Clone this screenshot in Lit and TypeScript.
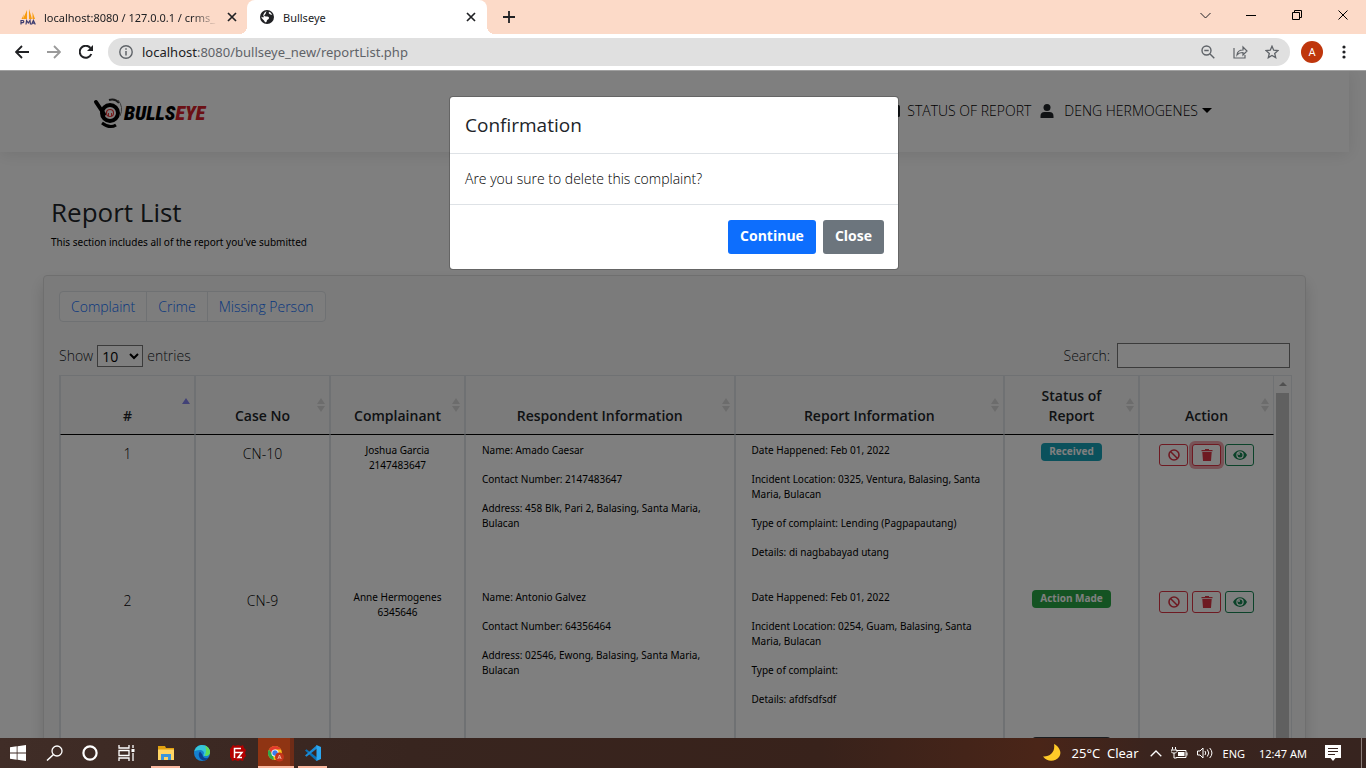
import { LitElement, html, css, svg, nothing } from "lit";
import { customElement, state } from "lit/decorators.js";
import { classMap } from "lit/directives/class-map.js";

interface Report {
  no: number;
  caseNo: string;
  complainant: string;
  phone: string;
  respondent: string[];
  details: string[];
  status: string;
  tone: string;
}

const REPORTS: Report[] = [
  {
    no: 1,
    caseNo: "CN-10",
    complainant: "Joshua Garcia",
    phone: "2147483647",
    respondent: [
      "Name: Amado Caesar",
      "Contact Number: 2147483647",
      "Address: 458 Blk, Pari 2, Balasing, Santa Maria, Bulacan",
    ],
    details: [
      "Date Happened: Feb 01, 2022",
      "Incident Location: 0325, Ventura, Balasing, Santa Maria, Bulacan",
      "Type of complaint: Lending (Pagpapautang)",
      "Details: di nagbabayad utang",
    ],
    status: "Received",
    tone: "info",
  },
  {
    no: 2,
    caseNo: "CN-9",
    complainant: "Anne Hermogenes",
    phone: "6345646",
    respondent: [
      "Name: Antonio Galvez",
      "Contact Number: 64356464",
      "Address: 02546, Ewong, Balasing, Santa Maria, Bulacan",
    ],
    details: [
      "Date Happened: Feb 01, 2022",
      "Incident Location: 0254, Guam, Balasing, Santa Maria, Bulacan",
      "Type of complaint:",
      "Details: afdfsdfsdf",
    ],
    status: "Action Made",
    tone: "success",
  },
];

const COLUMNS = [
  { label: "#", wide: false, asc: true },
  { label: "Case No", wide: false, asc: false },
  { label: "Complainant", wide: false, asc: false },
  { label: "Respondent Information", wide: true, asc: false },
  { label: "Report Information", wide: true, asc: false },
  { label: "Status of Report", wide: false, asc: false },
  { label: "Action", wide: false, asc: false },
];

const icon = (w: number, h: number, body: unknown) =>
  html`<svg width=${w} height=${h} viewBox="0 0 ${w} ${h}" fill="none" aria-hidden="true">${body}</svg>`;

const closeGlyph = icon(10, 10, svg`<path d="M1 1l8 8M9 1L1 9" stroke="#202124" stroke-width="1.7"/>`);

@customElement("browser-chrome")
export class BrowserChrome extends LitElement {
  static styles = css`
    :host {
      display: block;
      font-family: "Noto Sans", "Open Sans", sans-serif;
      color: #202124;
    }
    button {
      border: 0;
      padding: 0;
      background: none;
      color: inherit;
      display: flex;
      align-items: center;
      justify-content: center;
    }
    svg {
      display: block;
      flex: none;
    }
    .tabs {
      height: 34px;
      background: #fcdac8;
      display: flex;
      font-size: 11px;
    }
    .tab {
      display: flex;
      align-items: center;
      width: 240px;
      box-sizing: border-box;
      padding: 0 10px 0 13px;
      gap: 9px;
    }
    .tab.first {
      width: 247px;
      padding: 0 9px 0 20px;
      gap: 8px;
    }
    .tab.active {
      position: relative;
      background: #fff;
      border-radius: 8px 8px 0 0;
    }
    .tab.active::before,
    .tab.active::after {
      content: "";
      position: absolute;
      bottom: 0;
      width: 8px;
      height: 8px;
    }
    .tab.active::before {
      left: -8px;
      background: radial-gradient(circle at 0 0, transparent 8px, #fff 8px);
    }
    .tab.active::after {
      right: -8px;
      background: radial-gradient(circle at 100% 0, transparent 8px, #fff 8px);
    }
    .tab-title {
      flex: 1;
      min-width: 0;
      overflow: hidden;
      white-space: nowrap;
    }
    .tab.first .tab-title {
      mask-image: linear-gradient(to right, #000 85%, transparent);
    }
    .tab button {
      width: 12px;
      height: 16px;
    }
    .new-tab {
      width: 44px;
    }
    .controls {
      margin-left: auto;
      display: flex;
    }
    .controls button {
      width: 46px;
      height: 30px;
    }
    .toolbar {
      height: 36px;
      display: flex;
      align-items: center;
      background: #fff;
      padding: 0 6px;
      border-bottom: 1px solid #a0a0a0;
    }
    .nav {
      width: 32px;
      height: 32px;
    }
    .page-actions {
      display: flex;
    }
    .omnibox {
      flex: 1;
      min-width: 0;
      height: 28px;
      margin: 0 6px;
      padding: 0 2px 0 11px;
      border-radius: 14px;
      background: #e0e0e0;
      display: flex;
      align-items: center;
      gap: 9px;
      box-sizing: border-box;
    }
    .url {
      flex: 1;
      font-size: 13px;
      color: #5f6368;
    }
    .host {
      color: #202124;
    }
    .avatar {
      width: 22px;
      height: 22px;
      margin: 0 5px;
      border-radius: 50%;
      background: #bf360c;
      color: #fff;
      font: 11px Roboto, sans-serif;
    }
  `;

  render() {
    return html`
      <div class="tabs">
        <div class="tab first">
          ${icon(16, 16, svg`<path d="M7 1L3 10h4zM9 0v10h3zM12.500 3v7h2.500zM4 5L1.500 10H3z" fill="#f89c0e"/><path d="M1 15.500v-4h2q1.500 1.200 0 2.200H1M6 15.500l.600-4 1.700 2.500 1.700-2.500.500 4M11.500 15.500l1.900-4 1.900 4M12 14.200h3" stroke="#3c3c70" stroke-width="1.200"/>`)}
          <span class="tab-title">localhost:8080 / 127.0.0.1 / crms_</span>
          <button aria-label="Close tab">${closeGlyph}</button>
        </div>
        <div class="tab active">
          ${icon(14, 14, svg`<circle cx="7" cy="7" r="7" fill="#202124"/><path d="M7.500 1.500C5 2 6.500 3.500 5 4.500S4.200 6.300 6 6.500s3.200 0 3 1.700c-.200 1.300-2 1-2.200 2.500-.100 1-.600 1.800-1.800 1.600C4.500 10 1.300 9 1.400 6.500c1 1 2 1 2.600.500C2.500 5.500 4 3 5.500 1.800z" fill="#fff"/><path d="M9 1.800c-1 1.700.500 2.700 3.200 3.200L10.800 2.800z" fill="#fff"/>`)}
          <span class="tab-title">Bullseye</span>
          <button aria-label="Close tab">${closeGlyph}</button>
        </div>
        <button class="new-tab" aria-label="New tab">
          ${icon(12, 12, svg`<path d="M6 0v12M0 6h12" stroke="#202124" stroke-width="1.800"/>`)}
        </button>
        <div class="controls">
          <button aria-label="Search tabs">${icon(11, 7, svg`<path d="M.500 1l5 5 5-5" stroke="#202124"/>`)}</button>
          <button aria-label="Minimize">${icon(10, 1, svg`<path d="M0 .500h10" stroke="#000"/>`)}</button>
          <button aria-label="Restore">${icon(10, 10, svg`<path d="M.500 2.500h7v7h-7zM2.500 2.500v-2h7v7h-2" stroke="#000"/>`)}</button>
          <button aria-label="Close">${icon(10, 10, svg`<path d="M.500.500l9 9M9.500.500l-9 9" stroke="#000"/>`)}</button>
        </div>
      </div>
      <div class="toolbar">
        <button class="nav" aria-label="Back">${icon(14, 14, svg`<path d="M14 7H1.500M7 1L1 7l6 6" stroke="#202124" stroke-width="1.800"/>`)}</button>
        <button class="nav" aria-label="Forward">${icon(14, 14, svg`<path d="M0 7h12.500M7 1l6 6-6 6" stroke="#9a9a9a" stroke-width="1.800"/>`)}</button>
        <button class="nav" aria-label="Reload">${icon(14, 14, svg`<path d="M12.300 9A6 6 0 1 1 11.400 3" stroke="#202124" stroke-width="2"/><path d="M14 0v6H8z" fill="#202124"/>`)}</button>
        <div class="omnibox">
          ${icon(14, 14, svg`<circle cx="7" cy="7" r="6.200" stroke="#5f6368" stroke-width="1.400"/><path d="M7 6v4.500M7 3.300v1.500" stroke="#5f6368" stroke-width="1.500"/>`)}
          <span class="url"><span class="host">localhost</span>:8080/bullseye_new/reportList.php</span>
          <div class="page-actions">
            <button class="nav" aria-label="Zoom">${icon(14, 14, svg`<circle cx="5.500" cy="5.500" r="4.500" stroke="#5f6368" stroke-width="1.400"/><path d="M3.300 5.500h4.400M9 9l4.300 4.300" stroke="#5f6368" stroke-width="1.400"/>`)}</button>
            <button class="nav" aria-label="Share">${icon(15, 14, svg`<path d="M1 3v10h11v-3" stroke="#5f6368" stroke-width="1.200"/><path d="M4 10c.300-3.500 2.500-5 6-5V2l4 4-4 4V7.500C7.500 7.500 5.500 8 4 10z" stroke="#5f6368" stroke-width="1.200"/>`)}</button>
            <button class="nav" aria-label="Bookmark">${icon(14, 14, svg`<path d="M7 1.200l1.700 4 4.300.400-3.300 2.800 1 4.200L7 10.400l-3.700 2.200 1-4.200L1 5.600l4.300-.400z" stroke="#5f6368" stroke-width="1.300"/>`)}</button>
          </div>
        </div>
        <button class="avatar" aria-label="Profile">A</button>
        <button class="nav" aria-label="Menu">${icon(4, 14, svg`<g fill="#202124"><circle cx="2" cy="2" r="1.600"/><circle cx="2" cy="7" r="1.600"/><circle cx="2" cy="12" r="1.600"/></g>`)}</button>
      </div>
    `;
  }
}

@customElement("report-page")
export class ReportPage extends LitElement {
  static styles = css`
    :host {
      display: block;
      overflow: hidden;
      background: #fff;
      color: #000;
      font: 300 14px/22px "Open Sans", "Noto Sans", sans-serif;
      padding-right: 17px;
    }
    button,
    input,
    select {
      font: inherit;
    }
    svg {
      display: block;
      flex: none;
    }
    a {
      color: inherit;
      text-decoration: none;
    }
    .navbar {
      height: 81px;
      display: flex;
      align-items: center;
      box-sizing: border-box;
      padding: 0 137px 2px 93px;
      box-shadow: 0 2px 16px rgba(0, 0, 0, 0.1);
    }
    .brand {
      padding-top: 3px;
    }
    .links {
      margin-left: auto;
      display: flex;
      align-items: center;
      color: #000;
    }
    .links a {
      display: flex;
      align-items: center;
      gap: 7px;
    }
    .links .user {
      gap: 10px;
      margin-left: 9px;
    }
    .caret {
      border: 5px solid transparent;
      border-top-color: #000;
      border-bottom: 0;
      margin-left: -6px;
    }
    .wordmark {
      font: italic 900 20px "Liberation Sans Narrow", "Roboto Condensed", Roboto, sans-serif;
    }
    .intro {
      padding: 45px 51px 26px;
    }
    h1 {
      margin: 0 0 8px;
      font: 400 26px/30px "Open Sans", sans-serif;
      color: #212529;
    }
    .intro p {
      margin: 0;
      font: 400 10px/14px "Noto Sans", "Open Sans", sans-serif;
    }
    .card {
      margin: 0 43px;
      padding: 15px 13px 200px 15px;
      border: 1px solid #dfdfdf;
      border-radius: 4px;
      background: #f7f7f7;
      box-shadow: 0 8px 16px rgba(0, 0, 0, 0.15);
    }
    .filters {
      display: flex;
      width: fit-content;
      border: 1px solid #dee2e6;
      border-radius: 4px;
      background: #fafafa;
    }
    .filters a {
      padding: 0 11px;
      line-height: 29px;
      color: #0d6efd;
    }
    .filters a + a {
      border-left: 1px solid #dee2e6;
    }
    .bar {
      display: flex;
      justify-content: space-between;
      align-items: center;
      height: 25px;
      margin: 21px 2px 7px 0;
      color: #212529;
    }
    .bar select {
      width: 46px;
      height: 22px;
      padding: 0;
      border: 1px solid #767676;
      border-radius: 0;
      background: #fff;
      color: #000;
      font-weight: 400;
    }
    .bar label {
      display: flex;
      align-items: center;
      gap: 4px;
    }
    .bar .search {
      gap: 7px;
    }
    .bar input {
      width: 173px;
      height: 25px;
      box-sizing: border-box;
      border: 1px solid #767676;
      background: #fff;
    }
    .scroll {
      display: flex;
      border: 1px solid #dee2e6;
      border-bottom: 0;
    }
    .table-wrap {
      flex: 1;
      min-width: 0;
    }
    table {
      width: 100%;
      table-layout: fixed;
      border-collapse: separate;
      border-spacing: 0;
    }
    .wide {
      width: 22.2%;
    }
    th,
    td {
      box-sizing: border-box;
      border: solid #dee2e6;
      border-width: 0 1px;
      padding: 8px 16px;
      text-align: center;
      vertical-align: top;
    }
    th {
      position: relative;
      vertical-align: bottom;
      padding: 10px 16px 8px;
      border-bottom: 1px solid #000;
      color: #212529;
      font-weight: 600;
      line-height: 20px;
    }
    td {
      background: #fff;
      height: 147px;
    }
    .fine {
      font: 400 10px/15px "Noto Sans", "Open Sans", sans-serif;
    }
    .info {
      text-align: left;
    }
    .info p {
      margin: 0 0 14px;
    }
    .sort {
      position: absolute;
      right: 4px;
      bottom: 22px;
    }
    .badge {
      display: inline-block;
      vertical-align: top;
      padding: 0 8px 1px;
      border-radius: 4px;
      color: #fff;
      font-weight: 700;
      font-size: 10px;
      line-height: 17px;
    }
    .badge.info-tone {
      background: #17a2b8;
    }
    .badge.success-tone {
      background: #28a745;
    }
    .badge.dark-tone {
      background: #343a40;
      min-width: 63px;
    }
    .actions {
      display: flex;
      justify-content: center;
      gap: 4px;
      padding-top: 1px;
    }
    .actions button {
      width: 29px;
      height: 22px;
      padding: 0;
      border: 1px solid #dc3545;
      border-radius: 3px;
      background: #fff;
      display: flex;
      align-items: center;
      justify-content: center;
    }
    .actions .view {
      border-color: #198754;
    }
    .actions .focused {
      box-shadow: 0 0 0 3px #f0a5ac;
    }
    td.tight {
      padding: 8px 4px;
    }
    .track {
      width: 17px;
      display: flex;
      flex-direction: column;
      align-items: center;
      background: #f7f7f7;
    }
    .up {
      margin: 6px 0 7px;
      border: 4px solid transparent;
      border-top: 0;
      border-bottom-color: #a0a0a0;
    }
    .thumb {
      flex: 1;
      width: 13px;
      background: #c1c1c1;
    }
  `;

  private sortIcon(asc: boolean) {
    return html`<span class="sort">${asc
      ? icon(8, 14, svg`<path d="M4 0l4 6H0z" fill="#8585ee"/>`)
      : icon(8, 14, svg`<path d="M4 0l4 6H0zM0 8h8l-4 6z" fill="#d8d8d8"/>`)}</span>`;
  }

  private actions(focused: boolean) {
    return html`<div class="actions">
      <button aria-label="Cancel complaint">
        ${icon(12, 12, svg`<circle cx="6" cy="6" r="5" stroke="#dc3545" stroke-width="1.600"/><path d="M2.500 2.500l7 7" stroke="#dc3545" stroke-width="1.500"/>`)}
      </button>
      <button class=${classMap({ focused })} aria-label="Delete complaint">
        ${icon(12, 12, svg`<path d="M.500 1H4V0h4v1h3.500v1.300H.500zM1.300 3h9.400L10 12H2z" fill="#dc3545"/>`)}
      </button>
      <button class="view" aria-label="View complaint">
        ${icon(14, 10, svg`<path fill-rule="evenodd" d="M0 5c3-6.500 11-6.500 14 0-3 6.500-11 6.500-14 0zm7-3.700a3.700 3.700 0 1 0 0 7.400 3.700 3.700 0 0 0 0-7.400z" fill="#198754"/><circle cx="7" cy="5" r="2.500" fill="#198754"/><circle cx="6" cy="4" r="1" fill="#fff"/>`)}
      </button>
    </div>`;
  }

  render() {
    return html`
      <nav class="navbar">
        <a class="brand" href="#" aria-label="Bullseye">
          <svg width="122" height="34" viewBox="0 0 122 34" fill="none">
            <path d="M3 7l8 12" stroke="#000" stroke-width="4" stroke-linecap="round"/>
            <circle cx="17" cy="18" r="8" stroke="#000" stroke-width="4"/>
            <circle cx="17" cy="18" r="3.500" stroke="#e33" stroke-width="1.200"/>
            <path d="M15.500 21v-3M18.500 21v-3" stroke="#e33"/>
            <path d="M9 28q8 6 14 2" stroke="#000" stroke-width="3"/>
            <path d="M16 5q6-2 10 3" stroke="#333" stroke-width="2"/>
            <path d="M25 5q6 7 2 16" stroke="#777"/>
            <text class="wordmark" x="31" y="25"><tspan fill="#000">BULLS</tspan><tspan fill="#d6202a">EYE</tspan></text>
          </svg>
        </a>
        <div class="links">
          <a href="#">${icon(14, 14, svg`<rect y="1" width="14" height="12" rx="1.500" fill="#212529"/><path d="M10 5h2M10 8h2" stroke="#fff"/>`)}STATUS OF REPORT</a>
          <a class="user" href="#">${icon(14, 14, svg`<circle cx="7" cy="3.500" r="3.500" fill="#212529"/><path d="M.500 14v-2c0-2.500 1.500-4 4-4h5c2.500 0 4 1.500 4 4v2z" fill="#212529"/>`)}DENG HERMOGENES<span class="caret"></span></a>
        </div>
      </nav>
      <header class="intro">
        <h1>Report List</h1>
        <p>This section includes all of the report you've submitted</p>
      </header>
      <section class="card">
        <div class="filters"><a href="#">Complaint</a><a href="#">Crime</a><a href="#">Missing Person</a></div>
        <div class="bar">
          <label>Show <select><option>10</option><option>25</option><option>50</option></select> entries</label>
          <label class="search">Search: <input type="search" /></label>
        </div>
        <div class="scroll">
          <div class="table-wrap">
            <table>
              <thead>
                <tr>${COLUMNS.map((c) => html`<th class=${classMap({ wide: c.wide })}>${c.label}${this.sortIcon(c.asc)}</th>`)}</tr>
              </thead>
              <tbody>
                ${REPORTS.map((r, i) => html`<tr>
                  <td>${r.no}</td>
                  <td>${r.caseNo}</td>
                  <td class="fine tight">${r.complainant}<br />${r.phone}</td>
                  <td class="fine info">${r.respondent.map((t) => html`<p>${t}</p>`)}</td>
                  <td class="fine info">${r.details.map((t) => html`<p>${t}</p>`)}</td>
                  <td class="tight"><span class="badge ${r.tone}-tone">${r.status}</span></td>
                  <td class="tight">${this.actions(i === 0)}</td>
                </tr>`)}
                <tr>
                  <td></td><td></td><td></td><td></td><td></td>
                  <td class="tight"><span class="badge dark-tone">&nbsp;</span></td>
                  <td></td>
                </tr>
              </tbody>
            </table>
          </div>
          <div class="track"><span class="up"></span><span class="thumb"></span></div>
        </div>
      </section>
    `;
  }
}

@customElement("task-bar")
export class TaskBar extends LitElement {
  static styles = css`
    :host {
      display: flex;
      align-items: stretch;
      height: 30px;
      color: #fff;
      font: 12px "Noto Sans", "Open Sans", sans-serif;
      background: linear-gradient(to right, #402d27, #38251f 30%, #38221b 60%, #4a2518 76%, #3a241e 84%, #37241f);
    }
    button {
      width: 36px;
      padding: 0;
      border: 0;
      background: none;
      color: inherit;
      font: inherit;
      display: flex;
      align-items: center;
      justify-content: center;
    }
    svg {
      display: block;
      flex: none;
    }
    .apps {
      display: flex;
      margin-left: 3px;
    }
    .apps button {
      width: 36px;
      box-sizing: border-box;
      border-bottom: 2px solid transparent;
      border-top: 2px solid transparent;
      background-clip: padding-box;
    }
    .apps .open {
      width: 29px;
      margin: 0 4px;
      border-bottom-color: #fbb9a0;
    }
    .apps .active {
      background: linear-gradient(to right, #8f3413 88%, #6e2c17 88%) border-box;
      border-top-color: transparent;
      border-bottom-color: #fbb9a0;
      margin-left: 2px;
    }
    .tray {
      margin-left: auto;
      display: flex;
      align-items: center;
    }
    .tray button {
      width: auto;
      height: 100%;
    }
    .weather {
      gap: 11px;
      font-size: 13px;
      margin-right: 11px;
    }
    .small {
      display: flex;
      align-items: center;
      gap: 9px;
      margin-right: 10px;
    }
    .time {
      padding: 0 18px 0 14px;
      font-size: 11px;
    }
    .lang {
      font-size: 11px;
    }
    .edge {
      width: 5px;
      height: 100%;
      border-left: 1px solid #8a7d79;
      margin-left: 20px;
      box-sizing: border-box;
    }
  `;

  render() {
    return html`
      <button aria-label="Start">${icon(16, 16, svg`<path d="M0 2.300L6.700 1.300v6.300H0zM7.500 1.200L16 0v7.600H7.500zM0 8.400h6.700v6.300L0 13.700zM7.500 8.400H16V16l-8.500-1.200z" fill="#fff"/>`)}</button>
      <button aria-label="Search">${icon(17, 16, svg`<circle cx="11" cy="6" r="5" stroke="#fff" stroke-width="1.300"/><path d="M7.500 9.500L1 15.500" stroke="#fff" stroke-width="1.500"/>`)}</button>
      <button aria-label="Cortana">${icon(16, 16, svg`<circle cx="8" cy="8" r="6.600" stroke="#fff" stroke-width="2.200"/>`)}</button>
      <button aria-label="Task view">${icon(17, 16, svg`<path d="M1 0v3h10V0M1 16v-3h10v3M1 5.500h10v5H1zM15 0v3M15 8v8" stroke="#fff" stroke-width="1.300"/><path d="M13.500 4h3v3h-3z" fill="#fff"/>`)}</button>
      <div class="apps">
        <button class="open" aria-label="File Explorer">${icon(16, 14, svg`<path d="M0 0h7l1 2h8v4H0z" fill="#e0a010"/><path d="M0 3.500h16V14H0z" fill="#ffd565"/><path d="M3 14V8h10v6h-3v-3H6v3z" fill="#3a96dd"/>`)}</button>
        <button aria-label="Edge">${icon(16, 16, svg`<circle cx="8" cy="8" r="8" fill="#1580cf"/><path d="M.300 6.500C1.500 2 5 0 8 0c5 0 8 3.500 8 7 0 3-2.500 4-5 4-1.500 0-2-.600-1.500-1.500C11 7.500 9 5 6 5 3 5 1 6 .300 6.500z" fill="#36c5d8"/><path d="M11 .700c3 1 5 3.500 5 6.300 0 3-2.500 4-5 4-1 0 3-5 0-10.300z" fill="#5edc58"/><path d="M5 8c-1 3 1 7 5 7.500 2 0 4-1.500 4.500-2.700-3 1.200-6 0-6-3L6 6.500z" fill="#0c3f8f"/>`)}</button>
        <button aria-label="FileZilla">${icon(16, 16, svg`<path d="M3 0l2 1 3-1 3 1 2-1 1 3 2 2-1 3 1 3-2 2-1 3-3-1-2 1-3-1-3 1-1-3-2-2 1-3-1-3 2-2z" fill="#b30000"/><path d="M4.500 13V3.500H11M4.500 7.500H8M7.500 7.500h4.500l-4 5h4" stroke="#fff" stroke-width="1.500"/>`)}</button>
        <button class="active" aria-label="Chrome">${icon(18, 17, svg`<circle cx="8" cy="8" r="7" fill="#fbc116"/><path d="M1.900 4.500A7 7 0 0 1 14.100 4.500H8L5 9.500z" fill="#e33b2e"/><path d="M1.900 4.500L6 10.500l1 4.400A7 7 0 0 1 1.900 4.500z" fill="#2da94f"/><circle cx="8" cy="8" r="3.600" fill="#fff"/><circle cx="8" cy="8" r="2.700" fill="#3b7ded"/><circle cx="12.500" cy="12" r="4.500" fill="#c5341a"/><path d="M10.800 14l1.700-4 1.700 4M11.500 12.800h2" stroke="#f7c4b4" stroke-width=".800"/>`)}</button>
        <button class="open" aria-label="Visual Studio Code">${icon(16, 16, svg`<path d="M0 5.500L1.500 4.300 12 12.500v3.300L11.500 16z" fill="#0a72b8"/><path d="M0 10.500l1.500 1.200L12 3.500V0z" fill="#1b8bd6"/><path d="M11.500 0L16 2v12l-4.500 2z" fill="#2ba7f0"/>`)}</button>
      </div>
      <div class="tray">
        <button class="weather">
          ${icon(18, 18, svg`<path d="M11 0c6 3 8 9 5 13s-11 6-16-.500C7 13 12.500 8 11 0z" fill="#ffca28"/>`)}
          <span>25°C&nbsp; Clear</span>
        </button>
        <div class="small">
          ${icon(12, 7, svg`<path d="M.700 6.300L6 1l5.300 5.300" stroke="#fff" stroke-width="1.300"/>`)}
          ${icon(17, 12, svg`<path d="M5.500 3.500H15v7H5" stroke="#fff"/><path d="M7 5h6.500v4H7zM15.500 5.500h1v3h-1z" fill="#fff"/><path d="M1.500 0v2.500M4.500 0v2.500M0 3h6v1.500L4.500 6h-3L0 4.500zM3 6v5h2.500" stroke="#fff"/>`)}
          ${icon(16, 12, svg`<path d="M.500 4h2.500l3-3v10L3 8H.500z" stroke="#fff"/><path d="M8 4q1.500 2 0 4M10.300 2.500q3 3.500 0 7M12.700 1q4.500 5 0 10" stroke="#fff"/>`)}
        </div>
        <button class="lang">ENG</button>
        <button class="time">12:47 AM</button>
        <button aria-label="Notifications">${icon(16, 16, svg`<path d="M0 0h16v13h-5.500L8 16l-2.500-3H0z" fill="#fff"/><path d="M3 3.500h10M3 6.500h10M3 9.500h7" stroke="#37241f"/>`)}</button>
        <span class="edge"></span>
      </div>
    `;
  }
}

@customElement("app-root")
export class AppRoot extends LitElement {
  static styles = css`
    :host {
      display: flex;
      flex-direction: column;
      height: 100vh;
      overflow: hidden;
    }
    .viewport {
      flex: 1;
      min-height: 0;
      position: relative;
      overflow: hidden;
    }
    .backdrop {
      position: absolute;
      inset: 0;
      background: rgba(0, 0, 0, 0.5);
      display: flex;
      justify-content: center;
      align-items: flex-start;
      padding: 25px 18px 0 0;
    }
    dialog {
      position: static;
      margin: 0;
      padding: 0;
      width: 448px;
      border: 1px solid rgba(0, 0, 0, 0.2);
      border-radius: 4px;
      background: #fff;
      background-clip: padding-box;
      color: #212529;
      font-family: "Open Sans", "Noto Sans", sans-serif;
    }
    h2 {
      margin: 0;
      padding: 16px 15px;
      font: 400 19px/24px "Open Sans", sans-serif;
      border-bottom: 1px solid #dee2e6;
    }
    .message {
      margin: 0;
      padding: 15px;
      font-size: 14px;
      font-weight: 300;
      line-height: 20px;
      color: #000;
    }
    .footer {
      display: flex;
      justify-content: flex-end;
      gap: 7px;
      padding: 15px 14px;
      border-top: 1px solid #dee2e6;
    }
    .footer button {
      height: 34px;
      padding: 0 12px 3px;
      border: 0;
      border-radius: 3px;
      color: #fff;
      background: #6c757d;
      font: 700 14px "Open Sans", sans-serif;
    }
    .footer .primary {
      background: #0d6efd;
    }
  `;

  @state() private confirming = true;

  private dismiss() {
    this.confirming = false;
  }

  render() {
    return html`
      <browser-chrome></browser-chrome>
      <main class="viewport">
        <report-page></report-page>
        ${this.confirming
          ? html`<div class="backdrop">
              <dialog open aria-labelledby="confirm-title">
                <h2 id="confirm-title">Confirmation</h2>
                <p class="message">Are you sure to delete this complaint?</p>
                <div class="footer">
                  <button class="primary" @click=${this.dismiss}>Continue</button>
                  <button @click=${this.dismiss}>Close</button>
                </div>
              </dialog>
            </div>`
          : nothing}
      </main>
      <task-bar></task-bar>
    `;
  }
}
